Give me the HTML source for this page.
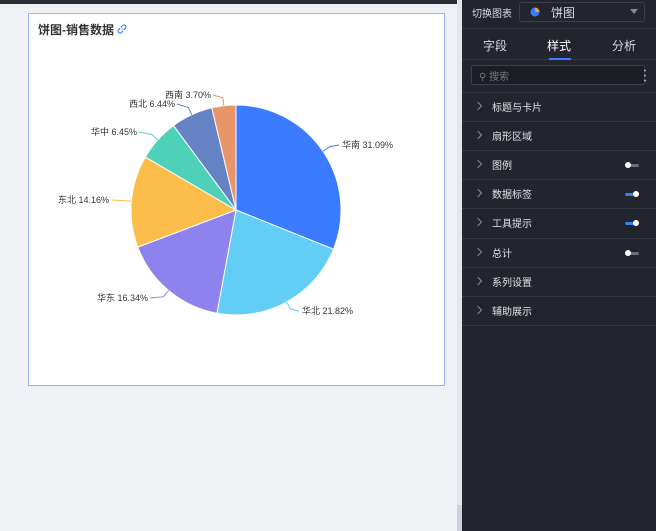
<!DOCTYPE html>
<html><head><meta charset="utf-8"><style>
*{margin:0;padding:0;box-sizing:border-box}
body{width:656px;height:531px;overflow:hidden;background:#f0f1f4;font-family:"Liberation Sans","Noto Sans CJK SC",sans-serif;position:relative}
.top{position:absolute;left:0;top:0;width:462px;height:4px;background:#2a2d33}
.card{position:absolute;left:28px;top:13px;width:417px;height:373px;background:#fff;border:1px solid #8fb4ff}
.title{position:absolute;left:9px;top:7px;font-size:12px;font-weight:bold;color:#333}
.strip{position:absolute;left:457px;top:0;width:5px;height:531px;background:#e4e6eb}
.thumb{position:absolute;left:457px;top:505px;width:5px;height:26px;background:#cfd2d9}
.panel{position:absolute;left:462px;top:0;width:194px;height:531px;background:#22252d;color:#d8dbe0;font-size:11px}
.sel{position:absolute;left:57px;top:2px;width:126px;height:20px;border:1px solid #3a3e48;border-radius:3px}
.tabs{position:absolute;left:0;top:28px;width:194px;height:32px;border-top:1px solid #343842;border-bottom:1px solid #343842}
.tab{position:absolute;top:8px;font-size:12px}
.search{position:absolute;left:9px;top:65px;width:174px;height:20px;border:1px solid #3a3e48;border-radius:2px;background:#1b1e24}
.row{position:absolute;left:0;width:194px;height:29px;border-top:1px solid #343842}
.row span{position:absolute;left:30px;top:6px;font-size:10px;color:#e0e2e6}
.row i{position:absolute;left:13px;top:10px;width:6px;height:6px;border-right:1px solid #888;border-bottom:1px solid #888;transform:rotate(-45deg)}
.tg{position:absolute;left:163px;top:13px;width:14px;height:3px;border-radius:2px;background:#6b6f78}
.tg.on{background:#3a7bff}
.tg b{position:absolute;top:-2px;width:6px;height:6px;border-radius:50%;background:#fff}
</style></head><body>
<div class="top"></div>
<div class="card"><div class="title">饼图-销售数据 <svg width="10" height="10" viewBox="0 0 10 10" style="vertical-align:0"><g fill="none" stroke="#3a7bff" stroke-width="1.2"><path d="M4.5 5.5L5.5 4.5"/><path d="M4 3L5.5 1.5a1.6 1.6 0 0 1 2.8 2.8L7 5.8"/><path d="M6 7L4.5 8.5a1.6 1.6 0 0 1-2.8-2.8L3 4.2"/></g></svg></div></div>
<svg id="pie" style="position:absolute;left:0;top:0" width="456" height="400" font-size="9" font-family="Liberation Sans,Noto Sans CJK SC,sans-serif" fill="#333"></svg>
<div class="strip"></div><div class="thumb"></div>
<div class="panel">
<div style="position:absolute;left:10px;top:5px;font-size:10px">切换图表</div>
<div class="sel"><svg style="position:absolute;left:10px;top:4px" width="10" height="10"><circle cx="5" cy="5" r="4.5" fill="#3a7bff"/><path d="M5 5V0.5A4.5 4.5 0 0 1 9.5 5Z" fill="#f39a3b"/></svg><span style="position:absolute;left:31px;top:1px;font-size:12px">饼图</span><span style="position:absolute;right:6px;top:6px;border:4px solid transparent;border-top:5px solid #888"></span></div>
<div class="tabs"><span class="tab" style="left:21px">字段</span><span class="tab" style="left:85px;color:#fff">样式</span><span class="tab" style="left:150px">分析</span><div style="position:absolute;left:87px;top:29px;width:22px;height:2px;background:#3a7bff"></div></div>
<div class="search"><span style="position:absolute;left:7px;top:2px;font-size:10px;color:#777">⚲ 搜索</span></div>
<div style="position:absolute;left:182px;top:68px;width:2px;height:14px;background:radial-gradient(circle,#aaa 1px,transparent 1px) 0 0/2px 5px"></div>
<div class="row" style="top:92px"><i></i><span>标题与卡片</span></div>
<div class="row" style="top:121px"><i></i><span>扇形区域</span></div>
<div class="row" style="top:150px"><i></i><span>图例</span><div class="tg"><b style="left:0"></b></div></div>
<div class="row" style="top:179px"><i></i><span>数据标签</span><div class="tg on"><b style="left:8px"></b></div></div>
<div class="row" style="top:208px"><i></i><span>工具提示</span><div class="tg on"><b style="left:8px"></b></div></div>
<div class="row" style="top:238px"><i></i><span>总计</span><div class="tg"><b style="left:0"></b></div></div>
<div class="row" style="top:267px"><i></i><span>系列设置</span></div>
<div class="row" style="top:296px"><i></i><span>辅助展示</span></div>
<div class="row" style="top:325px"></div>
</div>
<script>
var d=[["华南",31.09,"#3a7bff",342,148],["华北",21.82,"#62cdf5",302,314],["华东",16.34,"#8e83ee",97,301],["东北",14.16,"#fdbd4a",58,203],["华中",6.45,"#4fd1b9",91,135],["西北",6.44,"#6582c4",129,107],["西南",3.70,"#e8956a",165,98]];
var cx=236,cy=210,r=105,a=-Math.PI/2,s="",tot=100.0;
d.forEach(function(e){var da=e[1]/tot*2*Math.PI,b=a+da,m=a+da/2;
var x1=cx+r*Math.cos(a),y1=cy+r*Math.sin(a),x2=cx+r*Math.cos(b),y2=cy+r*Math.sin(b);
s+='<path d="M'+cx+' '+cy+'L'+x1+' '+y1+'A'+r+' '+r+' 0 '+(da>Math.PI?1:0)+' 1 '+x2+' '+y2+'Z" fill="'+e[2]+'" stroke="#fff" stroke-width="1"/>';
var px=cx+r*Math.cos(m),py=cy+r*Math.sin(m),qx=cx+(r+8)*Math.cos(m),qy=cy+(r+8)*Math.sin(m),right=Math.cos(m)>=0;
var lx=right?e[3]-3:e[3]+ (e[0]+" "+e[1].toFixed(2)+"%").length*5.6+3;
s+='<polyline points="'+px+','+py+' '+qx+','+qy+' '+lx+','+(e[4]-3)+'" fill="none" stroke="'+e[2]+'"/>';
s+='<text x="'+e[3]+'" y="'+e[4]+'">'+e[0]+' '+e[1].toFixed(2)+'%</text>';a=b;});
document.getElementById("pie").innerHTML=s;
</script>
</body></html>
